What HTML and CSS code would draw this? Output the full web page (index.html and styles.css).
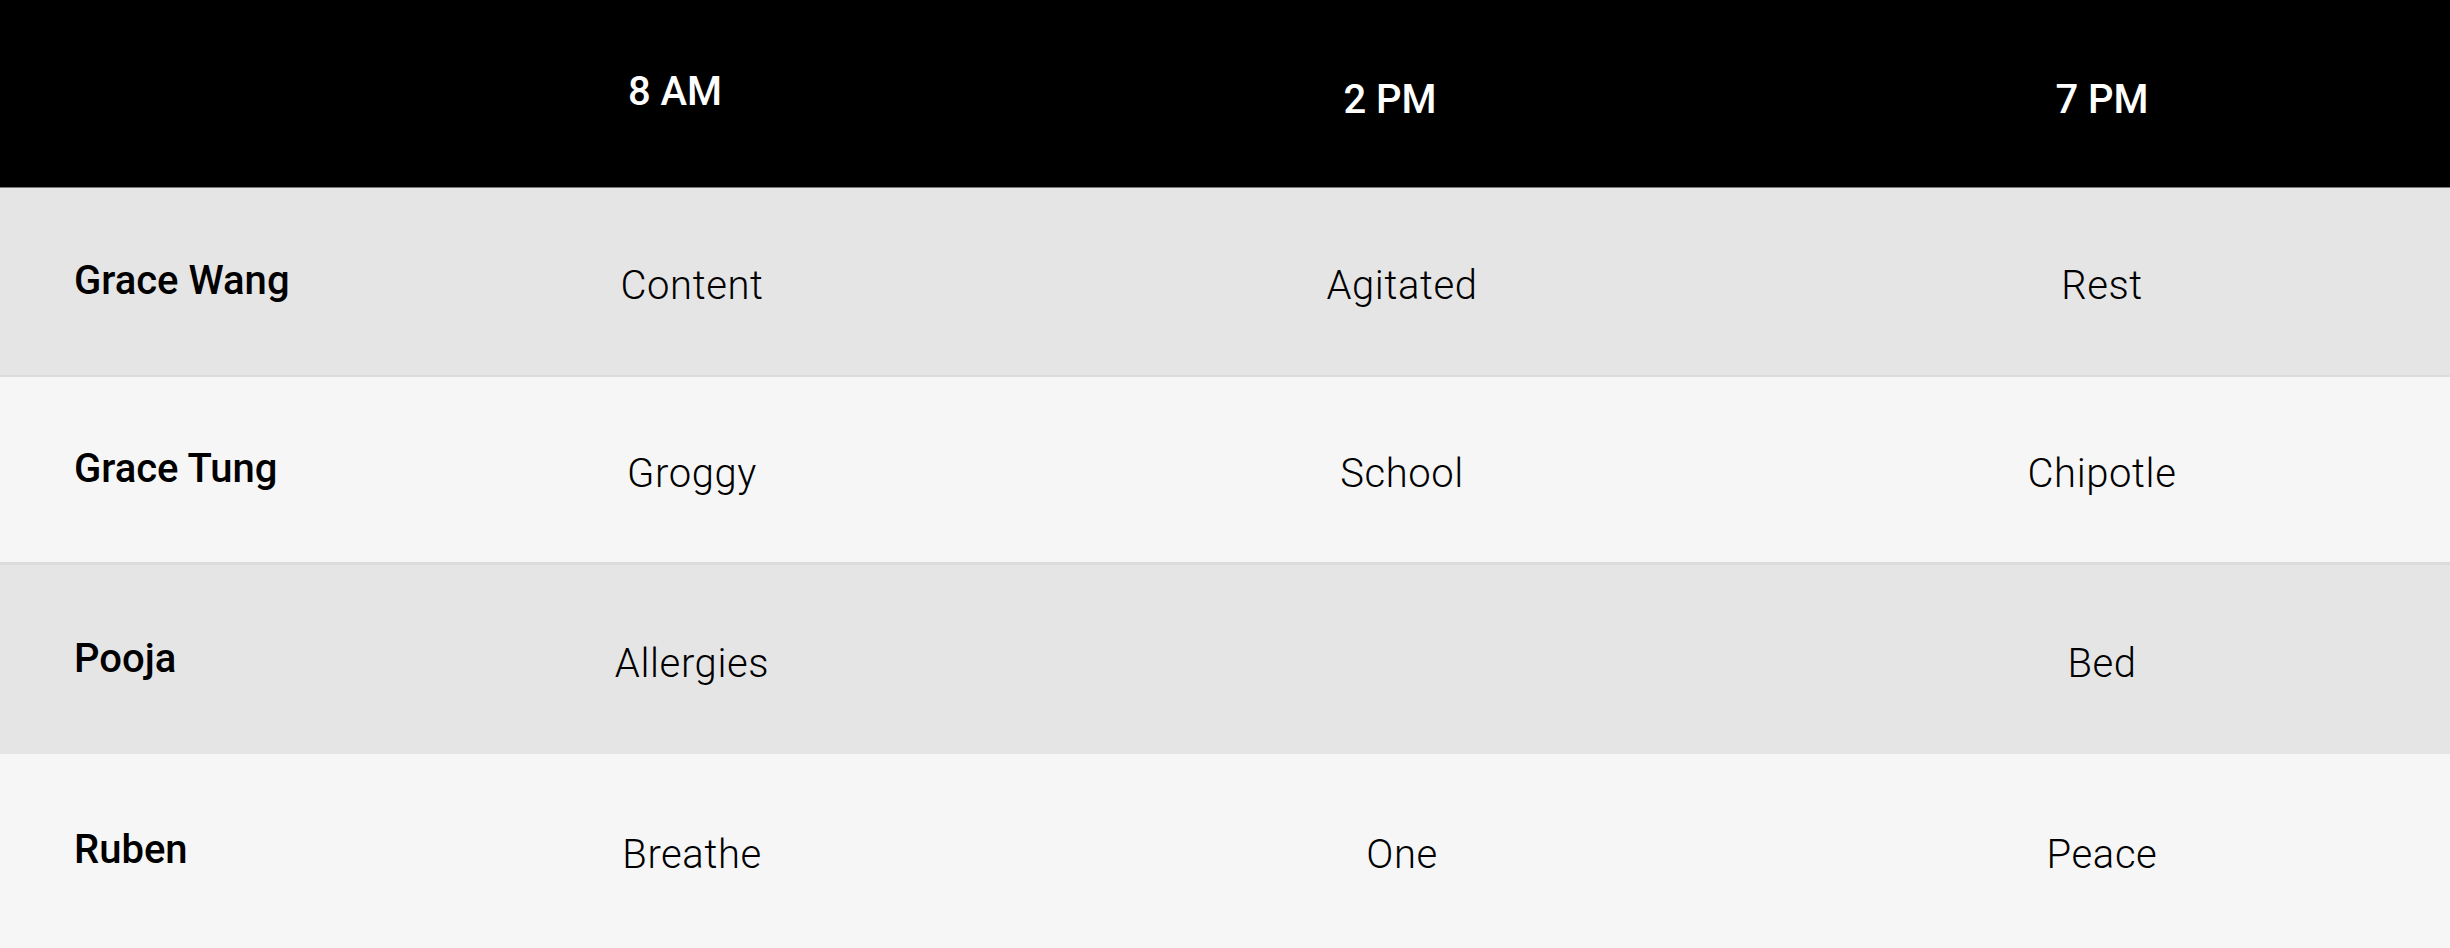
FILE: index.html
```html
<!DOCTYPE html>
<html lang="en">
<head>
    <meta charset="UTF-8">
    <meta name="viewport" content="width=device-width, initial-scale=1.0">
    <title>Mood Schedule</title>
    <link rel="stylesheet" href="styles.css">
</head>
<body>
    <div class="schedule">
        <div class="row head">
            <div class="cell name"></div>
            <div class="cell time time-am">8 AM</div>
            <div class="cell time time-mid">2 PM</div>
            <div class="cell time">7 PM</div>
        </div>

        <div class="row odd first">
            <div class="cell name">Grace Wang</div>
            <div class="cell">Content</div>
            <div class="cell">Agitated</div>
            <div class="cell">Rest</div>
        </div>

        <div class="row even">
            <div class="cell name">Grace Tung</div>
            <div class="cell">Groggy</div>
            <div class="cell">School</div>
            <div class="cell">Chipotle</div>
        </div>

        <div class="row odd">
            <div class="cell name">Pooja</div>
            <div class="cell">Allergies</div>
            <div class="cell"></div>
            <div class="cell">Bed</div>
        </div>

        <div class="row even last">
            <div class="cell name">Ruben</div>
            <div class="cell">Breathe</div>
            <div class="cell">One</div>
            <div class="cell">Peace</div>
        </div>
    </div>
</body>
</html>
```

FILE: styles.css
```css
/* styles.css */
body {
    margin: 0;
    font-family: Roboto, "Liberation Sans", sans-serif;
    background-color: #f6f6f6;
}

.schedule {
    display: flex;
    flex-direction: column;
}

.row {
    display: grid;
    grid-template-columns: 334px 716px 704px 1fr;
    height: 189px;
    box-sizing: border-box;
}

.cell {
    display: flex;
    align-items: center;
    justify-content: center;
    padding-top: 8px;
    font-size: 40px;
    font-weight: 300;
    letter-spacing: 0.6px;
    color: #000;
}

.cell.name {
    justify-content: flex-start;
    padding-top: 0;
    padding-bottom: 2px;
    padding-left: 74px;
    font-weight: 500;
    letter-spacing: 0;
    color: #000;
}

/* header */
.head {
    height: 188px;
    background-color: #000;
    border-bottom: 1px solid #7a7a7a;
}

.head .time {
    color: #fff;
    font-weight: 500;
    letter-spacing: 0;
    padding-top: 11px;
}

.head .time-am {
    padding-top: 0;
    padding-bottom: 5px;
    padding-right: 34px;
}

.head .time-mid {
    padding-right: 24px;
}

/* body rows */
.odd {
    background-color: #e5e5e5;
}

.even {
    background-color: #f6f6f6;
}

.first {
    border-bottom: 2px solid #dcdcdc;
}

.row.even:not(.last) {
    height: 188px;
    border-bottom: 3px solid #dcdcdc;
}

.last {
    height: 193px;
}
```
